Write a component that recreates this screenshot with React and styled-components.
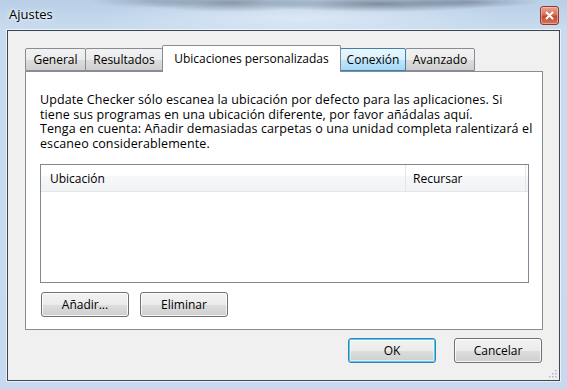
import React from "react";
import styled, { createGlobalStyle } from "styled-components";

const Global = createGlobalStyle`
  html, body { margin: 0; padding: 0; }
  body { width: 567px; height: 389px; overflow: hidden; font-family: "Open Sans", "Noto Sans", sans-serif; }
`;

const Window = styled.div`
  width: 567px;
  height: 389px;
  box-sizing: border-box;
  display: flex;
  flex-direction: column;
  padding: 0 7px 8px 7px;
  background:
    radial-gradient(ellipse 90px 9px at 230px 3px, rgba(70,80,95,0.45), transparent),
    radial-gradient(ellipse 120px 8px at 380px 4px, rgba(60,70,85,0.5), transparent),
    radial-gradient(ellipse 70px 6px at 470px 2px, rgba(80,90,105,0.4), transparent),
    radial-gradient(ellipse 60px 7px at 150px 1px, rgba(90,100,115,0.3), transparent),
    radial-gradient(ellipse 200px 20px at 300px 18px, rgba(235,243,252,0.6), transparent),
    linear-gradient(180deg, #b9cfe6 0px, #c9dcef 30px, #c6d9ee 100%);
  position: relative;
  overflow: hidden;
`;

const TitleBar = styled.div`
  height: 30px;
  display: flex;
  align-items: flex-start;
  justify-content: space-between;
  box-sizing: border-box;
  padding: 5px 1px 0 2px;
`;

const Title = styled.span`
  font-family: "Open Sans", "Noto Sans", sans-serif;
  font-size: 13px;
  color: #000;
  line-height: 18px;
  text-shadow: 0 0 6px rgba(255,255,255,0.9), 0 0 3px rgba(255,255,255,0.9);
`;

const CloseButton = styled.div`
  width: 19px;
  height: 19px;
  margin-top: 1px;
  box-sizing: border-box;
  border: 1px solid #8a3a2e;
  border-radius: 3px;
  background: linear-gradient(180deg, #e8a493 0%, #d7705a 45%, #c24a32 55%, #d4765c 100%);
  box-shadow: inset 0 0 0 1px rgba(255,220,210,0.45);
  display: flex;
  align-items: center;
  justify-content: center;
`;

const Client = styled.div`
  flex: 1;
  border: 1px solid #3c4650;
  background: #f0f0f0;
  box-shadow: 0 0 0 1px rgba(255,255,255,0.6);
  display: flex;
  flex-direction: column;
  position: relative;
`;

const TabControl = styled.div`
  margin: 14px 16px 0 17px;
  display: flex;
  flex-direction: column;
`;

const TabStrip = styled.div`
  display: flex;
  align-items: flex-end;
  height: 26px;
  position: relative;
  z-index: 1;
`;

const Tab = styled.div`
  box-sizing: border-box;
  height: ${(p) => (p.$selected ? "27px" : "23px")};
  width: ${(p) => p.$w}px;
  margin-left: ${(p) => (p.$first ? 0 : -1)}px;
  margin-bottom: ${(p) => (p.$selected ? "-1px" : "0")};
  border: 1px solid ${(p) => (p.$hover ? "#3c7fb1" : "#898c95")};
  border-bottom: ${(p) => (p.$selected ? "none" : "")};
  border-radius: 2px 2px 0 0;
  font-size: 12px;
  color: #000;
  display: flex;
  align-items: ${(p) => (p.$selected ? "flex-start" : "center")};
  padding-top: ${(p) => (p.$selected ? "4px" : "0")};
  justify-content: center;
  white-space: nowrap;
  position: relative;
  z-index: ${(p) => (p.$selected ? 2 : p.$hover ? 1 : 0)};
  background: ${(p) =>
    p.$selected
      ? "#ffffff"
      : p.$hover
      ? "linear-gradient(180deg, #eaf6fd 0%, #d9f0fc 50%, #bee6fd 51%, #a7d9f5 100%)"
      : "linear-gradient(180deg, #f2f2f2 0%, #ebebeb 50%, #dddddd 51%, #cfcfcf 100%)"};
`;

const Panel = styled.div`
  height: 259px;
  box-sizing: border-box;
  border: 1px solid #898c95;
  background: #fff;
  padding: 21px 14px 12px 14px;
  display: flex;
  flex-direction: column;
`;

const Info = styled.p`
  margin: 0;
  font-size: 12.5px;
  line-height: 14.5px;
  color: #000;
  white-space: nowrap;
  letter-spacing: 0.1px;
`;

const ListView = styled.div`
  margin-top: 13px;
  width: 489px;
  height: 121px;
  box-sizing: border-box;
  border: 1px solid #828790;
  background: #fff;
  display: flex;
  flex-direction: column;
`;

const Header = styled.div`
  height: 26px;
  display: flex;
  background: linear-gradient(180deg, #ffffff 0%, #ffffff 40%, #f7f8fa 41%, #f1f2f4 100%);
  border-bottom: 1px solid #e5e7ea;
`;

const HeaderCell = styled.div`
  box-sizing: border-box;
  width: ${(p) => p.$w}px;
  flex: ${(p) => (p.$fill ? 1 : "none")};
  border-right: ${(p) => (p.$fill ? "none" : "1px solid #e3e5e8")};
  padding-left: ${(p) => p.$pad}px;
  font-size: 12px;
  color: #000;
  display: flex;
  align-items: center;
`;

const ButtonRow = styled.div`
  display: flex;
  gap: 11px;
  margin-top: 9px;
  padding-left: 1px;
`;

const Button = styled.button`
  width: 88px;
  height: 25px;
  box-sizing: border-box;
  padding: 0;
  border: 1px solid ${(p) => (p.$default ? "#3c7fb1" : "#707070")};
  border-radius: 3px;
  font-family: "Open Sans", "Noto Sans", sans-serif;
  font-size: 12px;
  color: #000;
  background: linear-gradient(180deg, #f2f2f2 0%, #ebebeb 50%, #dddddd 51%, #cfcfcf 100%);
  box-shadow: ${(p) =>
    p.$default
      ? "inset 0 0 0 1px #48d1f8, inset 0 0 0 2px rgba(255,255,255,0.5)"
      : "inset 0 0 0 1px rgba(255,255,255,0.8)"};
`;

const Footer = styled.div`
  display: flex;
  justify-content: flex-end;
  gap: 18px;
  padding: 8px 17px 0 0;
`;

const Grip = styled.svg`
  position: absolute;
  right: 2px;
  bottom: 2px;
`;

const tabs = [
  { label: "General", w: 61 },
  { label: "Resultados", w: 78 },
  { label: "Ubicaciones personalizadas", w: 179, selected: true },
  { label: "Conexión", w: 66, hover: true },
  { label: "Avanzado", w: 70 },
];

export default function App() {
  return (
    <>
      <Global />
      <Window>
        <TitleBar>
          <Title>Ajustes</Title>
          <CloseButton>
            <svg width="9" height="9" viewBox="0 0 9 9">
              <path d="M1.5 1.5 L7.5 7.5 M7.5 1.5 L1.5 7.5" stroke="#fff" strokeWidth="2" strokeLinecap="round" />
            </svg>
          </CloseButton>
        </TitleBar>
        <Client>
          <TabControl>
            <TabStrip>
              {tabs.map((t, i) => (
                <Tab key={t.label} $w={t.w} $first={i === 0} $selected={t.selected} $hover={t.hover}>
                  {t.label}
                </Tab>
              ))}
            </TabStrip>
            <Panel>
              <Info>
                Update Checker sólo escanea la ubicación por defecto para las aplicaciones. Si
                <br />
                tiene sus programas en una ubicación diferente, por favor añádalas aquí.
                <br />
                Tenga en cuenta: Añadir demasiadas carpetas o una unidad completa ralentizará el
                <br />
                escaneo considerablemente.
              </Info>
              <ListView>
                <Header>
                  <HeaderCell $w={365} $pad={9}>Ubicación</HeaderCell>
                  <HeaderCell $w={120} $pad={7}>Recursar</HeaderCell>
                  <HeaderCell $fill $pad={0} />
                </Header>
              </ListView>
              <ButtonRow>
                <Button>Añadir...</Button>
                <Button>Eliminar</Button>
              </ButtonRow>
            </Panel>
          </TabControl>
          <Footer>
            <Button $default>OK</Button>
            <Button>Cancelar</Button>
          </Footer>
          <Grip width="10" height="10" viewBox="0 0 10 10">
            {[[8, 2], [8, 5], [5, 5], [8, 8], [5, 8], [2, 8]].map(([x, y]) => (
              <rect key={`${x}-${y}`} x={x} y={y} width="1.5" height="1.5" fill="#b0b8c0" />
            ))}
          </Grip>
        </Client>
      </Window>
    </>
  );
}
